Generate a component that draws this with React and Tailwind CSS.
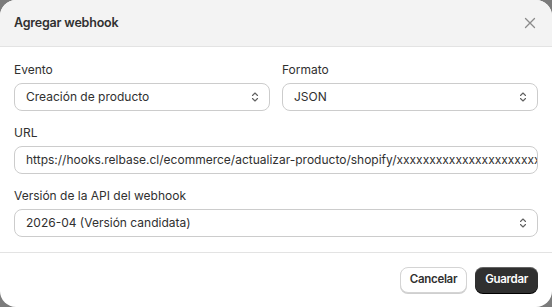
import React from "react"

function Chevrons() {
  return (
    <svg width="12" height="14" viewBox="0 0 12 14" fill="none" className="text-[#616161]">
      <path d="M3.5 5.5 6 3l2.5 2.5" stroke="currentColor" strokeWidth="1.1" strokeLinecap="round" strokeLinejoin="round" />
      <path d="M3.5 8.5 6 11l2.5-2.5" stroke="currentColor" strokeWidth="1.1" strokeLinecap="round" strokeLinejoin="round" />
    </svg>
  )
}

function Field({ label, children }) {
  return (
    <div className="flex flex-col">
      <label className="h-5 leading-5 mb-[3px] text-[12px] text-[#303030]">{label}</label>
      {children}
    </div>
  )
}

function SelectBox({ value }) {
  return (
    <div className="h-7 flex items-center justify-between pl-[11px] pr-2 rounded-lg border border-[#cccccc] bg-white text-[12px] text-[#303030]">
      <span>{value}</span>
      <Chevrons />
    </div>
  )
}

export default function App() {
  return (
    <div className="w-[552px] h-[307px] bg-[#7b7b7b]" style={{ fontFamily: "Inter, 'Noto Sans', sans-serif" }}>
      <div className="w-full h-full bg-white rounded-[16px] overflow-hidden flex flex-col">
        {/* header */}
        <div className="h-[47px] shrink-0 bg-[#f3f3f3] border-b border-[#e3e3e3] flex items-center justify-between pl-[14px] pr-[16px]">
          <h2 className="text-[12.5px] tracking-[-0.2px] font-semibold text-[#303030]">Agregar webhook</h2>
          <svg width="12" height="12" viewBox="0 0 12 12" className="text-[#8a8a8a]">
            <path d="M1.5 1.5l9 9M10.5 1.5l-9 9" stroke="currentColor" strokeWidth="1.3" strokeLinecap="round" />
          </svg>
        </div>

        {/* body */}
        <div className="px-[14px] pt-[13px] pb-[15px] flex flex-col gap-3 border-b border-[#e3e3e3]">
          <div className="grid grid-cols-2 gap-3">
            <Field label="Evento">
              <SelectBox value="Creación de producto" />
            </Field>
            <Field label="Formato">
              <SelectBox value="JSON" />
            </Field>
          </div>
          <Field label="URL">
            <div className="h-7 flex items-center pl-[11px] rounded-lg border border-[#cccccc] bg-white text-[12px] text-[#303030] overflow-hidden whitespace-nowrap">
              https://hooks.relbase.cl/ecommerce/actualizar-producto/shopify/xxxxxxxxxxxxxxxxxxxxxxxxxxx
            </div>
          </Field>
          <Field label="Versión de la API del webhook">
            <SelectBox value="2026-04 (Versión candidata)" />
          </Field>
        </div>

        {/* footer */}
        <div className="flex-1 flex items-center justify-end gap-2 px-[14px]">
          <button className="h-[26px] px-[9px] rounded-lg bg-white border border-[#d4d4d4] shadow-[0_1px_0_#cfcfcf] text-[11.5px] tracking-[-0.3px] font-semibold text-[#303030]">
            Cancelar
          </button>
          <button className="h-[26px] px-[10px] rounded-lg bg-[#303030] shadow-[inset_0_1px_0_rgba(255,255,255,0.25),0_1px_0_#000] text-[11.5px] tracking-[-0.3px] font-semibold text-white">
            Guardar
          </button>
        </div>
      </div>
    </div>
  )
}
